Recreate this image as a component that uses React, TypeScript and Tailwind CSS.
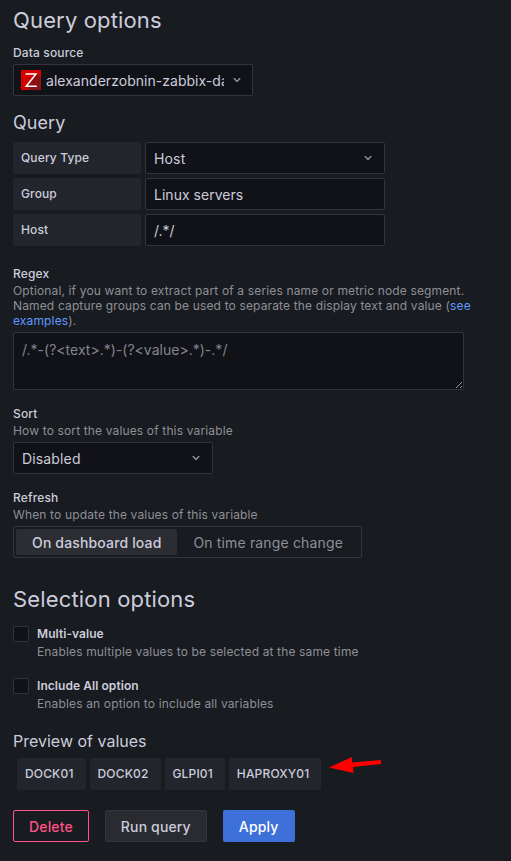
import { useState, type ReactNode } from 'react';
import clsx from 'clsx';

const previewValues = ['DOCK01', 'DOCK02', 'GLPI01', 'HAPROXY01'];
const refreshOptions = ['On dashboard load', 'On time range change'];

const boxClass = 'h-8 border border-[#34353b] rounded-[2px] bg-[#111217]';

const Chevron = () => (
  <svg width="16" height="16" viewBox="0 0 24 24" className="shrink-0 text-[#94959d]" fill="currentColor">
    <path d="M17 9.17a1 1 0 0 0-1.41 0L12 12.71 8.46 9.17a1 1 0 0 0-1.41 0 1 1 0 0 0 0 1.42l4.24 4.24a1 1 0 0 0 1.42 0L17 10.59a1 1 0 0 0 0-1.42Z" />
  </svg>
);

const ZabbixLogo = () => (
  <svg width="20" height="20" viewBox="0 0 20 20" className="shrink-0">
    <rect width="20" height="20" fill="#d40000" />
    <path d="M15.5 3.5 20 8v12H8l-3.5-3.5Z" fill="#8c1014" />
    <path d="M4.5 3.9H15L5.2 16.3h10.6" fill="none" stroke="#fff" strokeWidth="1.5" />
  </svg>
);

const Label = ({ title, description }: { title: string; description?: ReactNode }) => (
  <div className="text-[12px] leading-[15px] tracking-[0.145px]">
    <div className="font-medium">{title}</div>
    {description && <div className="mt-[2px] text-[#8e8f98]">{description}</div>}
  </div>
);

const QueryField = ({ label, children }: { label: string; children: ReactNode }) => (
  <div className="flex gap-1">
    <div className="h-8 w-32 rounded-[2px] bg-[#22252b] px-2 text-[12px] leading-8 font-medium tracking-[0.13px]">{label}</div>
    {children}
  </div>
);

const CheckboxField = ({ title, description }: { title: string; description: string }) => {
  const [checked, setChecked] = useState(false);

  return (
    <label className="flex gap-2 text-[12px] tracking-[0.145px]">
      <input
        type="checkbox"
        checked={checked}
        onChange={(e) => setChecked(e.target.checked)}
        className="h-4 w-4 shrink-0 appearance-none rounded-[2px] border border-[#34353b] bg-[#111217] checked:bg-[#3d71d9]"
      />
      <div>
        <div className="leading-4 font-semibold tracking-[0.06px]">{title}</div>
        <div className="mt-[2px] leading-4 text-[#8e8f98]">{description}</div>
      </div>
    </label>
  );
};

const App = () => {
  const [group, setGroup] = useState('Linux servers');
  const [host, setHost] = useState('/.*/');
  const [regex, setRegex] = useState('');
  const [refresh, setRefresh] = useState(refreshOptions[0]);

  return (
    <div className="h-[861px] w-[511px] overflow-hidden bg-[#181b1f] pl-[13px] font-['Inter',sans-serif] text-[14px] tracking-[0.15px] text-[#ccccdc]">
      <h2 className="pt-[6px] text-[22px] leading-7 tracking-[0.15px]">Query options</h2>
      <div className="mt-[11px]">
        <Label title="Data source" />
      </div>
      <div className={clsx(boxClass, 'mt-1 flex w-60 items-center pr-[7px] pl-[7px]')}>
        <ZabbixLogo />
        <span className="ml-[5px] w-[178px] overflow-hidden tracking-[0.03px] whitespace-nowrap">alexanderzobnin-zabbix-da</span>
        <div className="ml-[5px]">
          <Chevron />
        </div>
      </div>

      <h3 className="mt-[15px] text-[18px] leading-6 tracking-[0.05px]">Query</h3>
      <div className="mt-[7px] flex flex-col gap-1">
        <QueryField label="Query Type">
          <div className={clsx(boxClass, 'flex w-60 items-center justify-between px-2')}>
            Host
            <Chevron />
          </div>
        </QueryField>
        <QueryField label="Group">
          <input className={clsx(boxClass, 'w-60 px-2 tracking-[0.03px] outline-none')} value={group} onChange={(e) => setGroup(e.target.value)} />
        </QueryField>
        <QueryField label="Host">
          <input className={clsx(boxClass, 'w-60 px-2 tracking-[0] outline-none')} value={host} onChange={(e) => setHost(e.target.value)} />
        </QueryField>
      </div>

      <div className="mt-5 w-[465px]">
        <Label
          title="Regex"
          description={
            <>
              Optional, if you want to extract part of a series name or metric node segment.
              <br />
              Named capture groups can be used to separate the display text and value (<a className="text-[#5f98ff]">see
              <br />
              examples</a>).
            </>
          }
        />
      </div>
      <textarea
        className="mt-1 block h-[58px] w-[451px] resize rounded-[2px] border border-[#34353b] bg-[#111217] px-2 py-[6px] leading-[22px] tracking-[0.01px] outline-none placeholder:text-[#83848c]"
        placeholder="/.*-(?<text>.*)-(?<value>.*)-.*/"
        value={regex}
        onChange={(e) => setRegex(e.target.value)}
      />

      <div className="mt-4">
        <Label title="Sort" description="How to sort the values of this variable" />
      </div>
      <div className={clsx(boxClass, 'mt-1 flex w-[200px] items-center justify-between px-2')}>
        Disabled
        <Chevron />
      </div>

      <div className="mt-4">
        <Label title="Refresh" description="When to update the values of this variable" />
      </div>
      <div className="mt-1 flex h-8 w-[349px] rounded-[2px] border border-[#34353b] p-[2px]">
        {refreshOptions.map((option) => (
          <button
            key={option}
            onClick={() => setRefresh(option)}
            className={clsx('h-[26px] rounded-[2px] px-4 whitespace-nowrap', refresh === option ? 'bg-[#2c2d33] font-medium' : 'text-[#8e8f98]')}
          >
            {option}
          </button>
        ))}
      </div>

      <h2 className="mt-[27px] text-[22px] leading-7 tracking-[0.16px]">Selection options</h2>
      <div className="mt-[13px] flex flex-col gap-[18px]">
        <CheckboxField title="Multi-value" description="Enables multiple values to be selected at the same time" />
        <CheckboxField title="Include All option" description="Enables an option to include all variables" />
      </div>

      <h5 className="mt-[18px] text-[16px] leading-[22px] tracking-[0]">Preview of values</h5>
      <div className="mt-[6px] flex h-8 items-start gap-1 pl-1">
        {previewValues.map((value) => (
          <div key={value} className="h-8 rounded-[2px] bg-[#22252b] pr-3 pl-2 text-[12px] leading-8 font-medium tracking-[0.15px]">
            {value}
          </div>
        ))}
        <svg width="54" height="18" viewBox="0 0 54 18" className="-mt-px ml-1">
          <path d="M0 10.5 23 0v5.5l29-2.5v4l-28 3 .5 6Z" fill="#f00" />
        </svg>
      </div>

      <div className="mt-5 flex gap-4 font-medium">
        <button className="h-8 rounded-[2px] border border-[#ff5286] px-[15px] text-[#ff5286]">Delete</button>
        <button className="h-8 rounded-[2px] border border-[#34363b] bg-[#292b30] px-[15px]">Run query</button>
        <button className="h-8 rounded-[2px] bg-[#3d71d9] px-4 text-white">Apply</button>
      </div>
    </div>
  );
};

export default App;
